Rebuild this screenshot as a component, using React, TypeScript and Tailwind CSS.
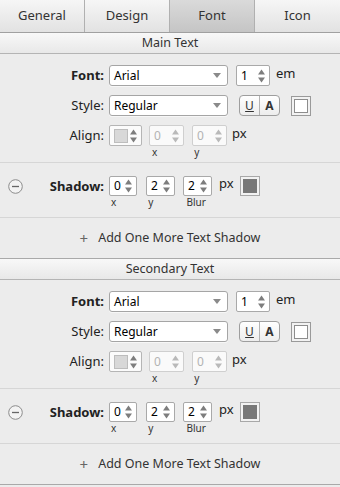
import React from "react";

const tabs = ["General", "Design", "Font", "Icon"];

function Arrows({ disabled }: { disabled?: boolean }) {
  const c = disabled ? "#b9b9b9" : "#7d7d7d";
  return (
    <svg width="9" height="16" viewBox="0 0 9 16" className="shrink-0">
      <path d="M4.5 1.5 L8 6.5 L1 6.5 Z" fill={c} />
      <path d="M1 9.5 L8 9.5 L4.5 14.5 Z" fill={c} />
    </svg>
  );
}

function Stepper({
  value,
  w,
  h = 21,
  disabled,
}: {
  value: string;
  w: string;
  h?: number;
  disabled?: boolean;
}) {
  return (
    <div
      className={`flex items-center rounded-[2px] border pr-[3px] ${w} ${
        h === 21 ? "h-[21px]" : "h-[20px]"
      } ${disabled ? "border-[#cfcfcf] bg-[#fafafa] text-[#b3b3b3]" : "border-[#a9a9a9] bg-white text-black"}`}
    >
      <span className="flex-1 pl-[4px] text-[12px] leading-none">{value}</span>
      <Arrows disabled={disabled} />
    </div>
  );
}

function Select({ value }: { value: string }) {
  return (
    <div className="flex h-[21px] w-[119px] items-center rounded-[3px] border border-[#a5a5a5] bg-white pr-[6px] shadow-[0_1px_0_#f7f7f7]">
      <span className="flex-1 pl-[4px] text-[12px] leading-none text-black">{value}</span>
      <svg width="8" height="5" viewBox="0 0 8 5">
        <path d="M0 0 L8 0 L4 5 Z" fill="#8a8a8a" />
      </svg>
    </div>
  );
}

function Label({ text, bold }: { text: string; bold?: boolean }) {
  return (
    <div className={`w-[104px] text-right text-[13px] leading-[21px] text-[#222] ${bold ? "font-bold" : ""}`}>
      {text}
    </div>
  );
}

function Section({ title }: { title: string }) {
  return (
    <section className="border-b border-[#a9a9a9]">
      <div className="h-[21px] border-b border-[#b4b4b4] bg-gradient-to-b from-[#f8f8f8] to-[#e8e8e8] text-center text-[12.5px] leading-[20px] text-[#333]">
        {title}
      </div>

      <div className="border-b border-[#d6d6d6] pt-[11px] pb-[4px]">
        <div className="flex h-[21px]">
          <Label text="Font:" bold />
          <div className="ml-[5px] flex">
            <Select value="Arial" />
            <div className="ml-[8px]">
              <Stepper value="1" w="w-[34px]" />
            </div>
            <span className="ml-[6px] text-[13px] leading-[16px] text-[#222]">em</span>
          </div>
        </div>

        <div className="mt-[9px] flex h-[21px]">
          <Label text="Style:" />
          <div className="ml-[5px] flex items-center">
            <Select value="Regular" />
            <div className="ml-[11px] flex h-[21px] w-[41px] overflow-hidden rounded-[4px] border border-[#9e9e9e] bg-gradient-to-b from-white to-[#ededed] text-[12px] text-[#333]">
              <span className="flex flex-1 items-center justify-center border-r border-[#b3b3b3] underline">U</span>
              <span className="flex flex-1 items-center justify-center font-bold">A</span>
            </div>
            <div className="ml-[11px] h-[20px] w-[20px] border border-[#9a9a9a] bg-[#f2f2f2] p-[2px]">
              <div className="h-full w-full border border-[#8d8d8d] bg-white" />
            </div>
          </div>
        </div>

        <div className="mt-[9px] flex h-[21px]">
          <Label text="Align:" />
          <div className="ml-[5px] flex">
            <div className="flex h-[21px] w-[33px] items-center rounded-[2px] border border-[#b5b5b5] bg-[#fbfbfb] pr-[3px] pl-[4px]">
              <div className="h-[14px] w-[14px] border border-[#bdbdbd] bg-[#d8d8d8]" />
              <div className="flex-1" />
              <Arrows />
            </div>
            <div className="ml-[7px]">
              <Stepper value="0" w="w-[35px]" disabled />
            </div>
            <div className="ml-[8px]">
              <Stepper value="0" w="w-[35px]" disabled />
            </div>
            <span className="ml-[5px] text-[13px] leading-[16px] text-[#222]">px</span>
          </div>
        </div>
        <div className="flex h-[12px] text-[10px] leading-[12px] text-[#333]">
          <span className="ml-[152px]">x</span>
          <span className="ml-[37px]">y</span>
        </div>
      </div>

      <div className="border-b border-[#d6d6d6] pt-[13px] pb-[9px]">
        <div className="flex h-[20px]">
          <div className="flex w-[104px] items-center justify-between pl-[8px]">
            <svg width="15" height="15" viewBox="0 0 15 15">
              <circle cx="7.5" cy="7.5" r="6.8" fill="#f3f3f3" stroke="#8c8c8c" strokeWidth="1" />
              <path d="M4 7.5 H11" stroke="#666" strokeWidth="1.3" />
            </svg>
            <span className="text-[13px] font-bold leading-[20px] text-[#222]">Shadow:</span>
          </div>
          <div className="ml-[5px] flex">
            <Stepper value="0" w="w-[28px]" h={20} />
            <div className="ml-[9px]">
              <Stepper value="2" w="w-[29px]" h={20} />
            </div>
            <div className="ml-[8px]">
              <Stepper value="2" w="w-[29px]" h={20} />
            </div>
            <span className="ml-[7px] text-[13px] leading-[15px] text-[#222]">px</span>
            <div className="ml-[6px] h-[20px] w-[20px] border border-[#a8a8a8] bg-[#f2f2f2] p-[2px]">
              <div className="h-full w-full bg-[#787878]" />
            </div>
          </div>
        </div>
        <div className="flex h-[12px] text-[10px] leading-[13px] text-[#333]">
          <span className="ml-[111px]">x</span>
          <span className="ml-[32px]">y</span>
          <span className="ml-[33px]">Blur</span>
        </div>
      </div>

      <div className="flex h-[40px] items-center justify-center text-[12.5px] text-[#333]">
        <span className="mr-[10px] text-[15px] leading-none text-[#666]">+</span>
        <span>Add One More Text Shadow</span>
      </div>
    </section>
  );
}

export default function App() {
  return (
    <div className="h-[487px] w-[340px] overflow-hidden bg-[#ececec] font-['Noto_Sans',sans-serif]">
      <div className="grid h-[33px] grid-cols-4 border-b border-[#a0a0a0]">
        {tabs.map((t, i) => (
          <div
            key={t}
            className={`flex items-center justify-center text-[13px] text-[#333] ${
              i < 3 ? "border-r border-[#b0b0b0]" : ""
            } ${
              t === "Font"
                ? "bg-gradient-to-b from-[#dadada] to-[#c5c5c5]"
                : "bg-gradient-to-b from-[#f6f6f6] to-[#e2e2e2]"
            }`}
          >
            {t}
          </div>
        ))}
      </div>
      <Section title="Main Text" />
      <Section title="Secondary Text" />
    </div>
  );
}
